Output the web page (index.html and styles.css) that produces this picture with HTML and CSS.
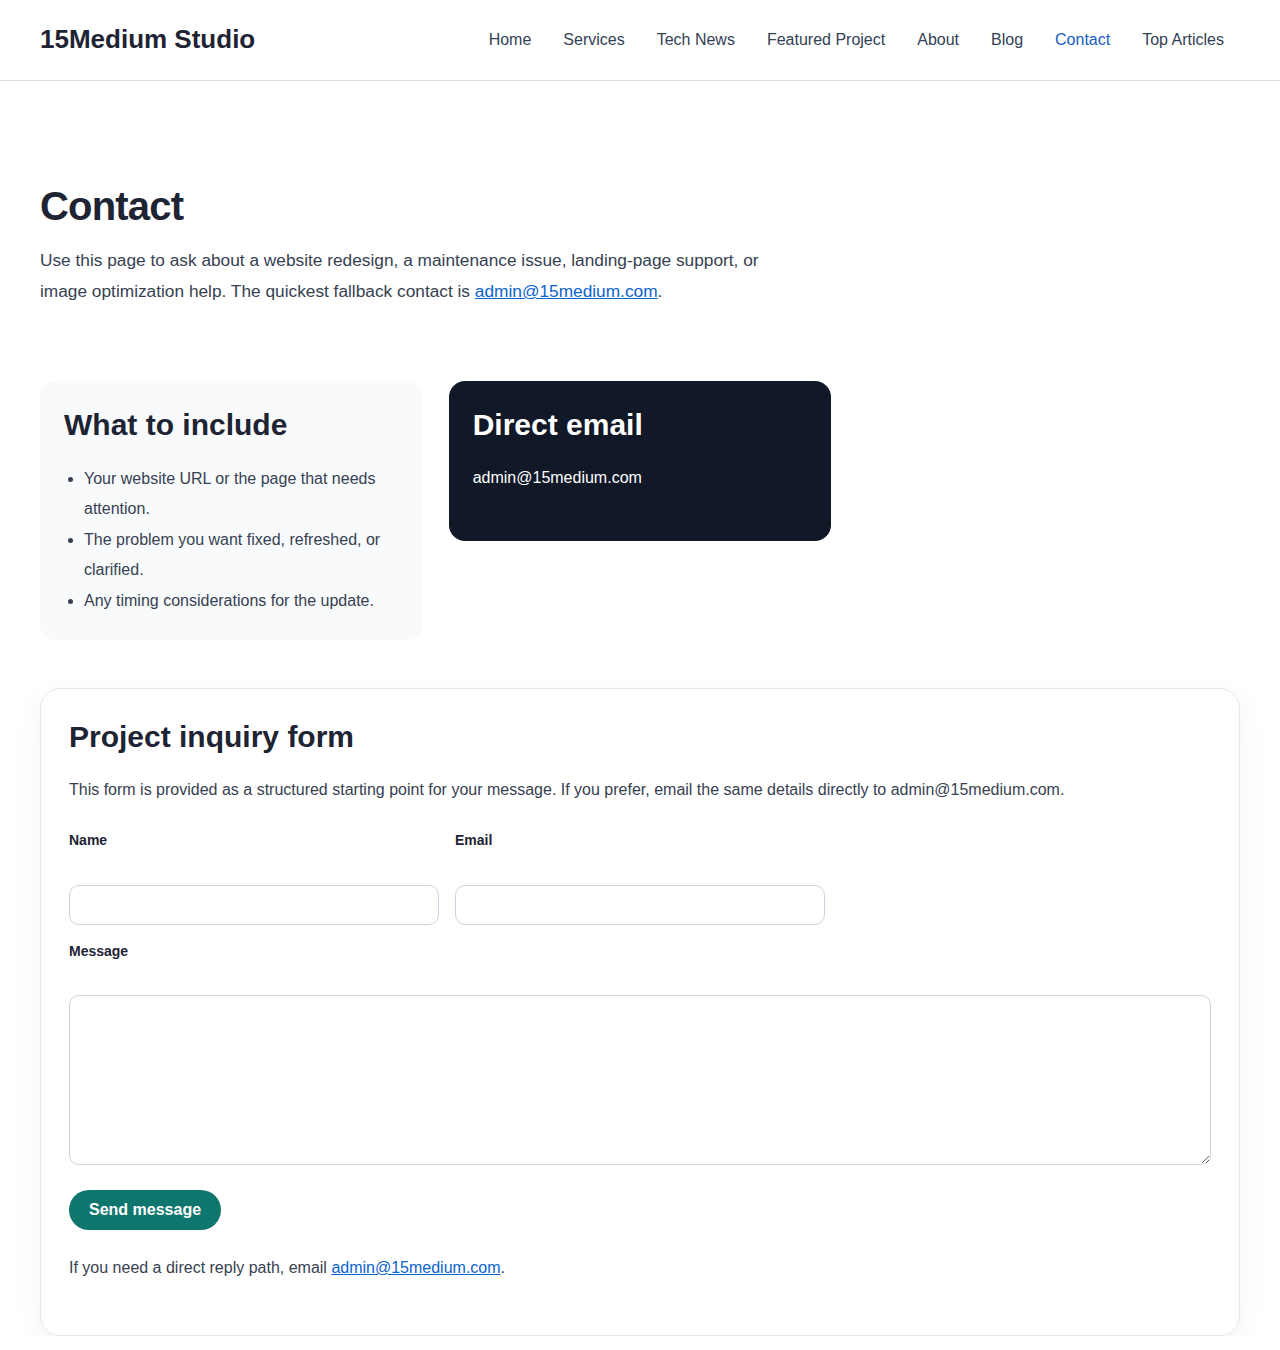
FILE: index.html
```html
<!DOCTYPE html>
<html lang="en">
<head>
<meta charset="utf-8">
<title>Contact | 15Medium Studio</title>
<link rel="stylesheet" href="styles.css">
</head>
<body>
<header class="site-header">
  <div class="container header-inner">
    <a class="logo" href="#">15Medium Studio</a>
    <nav class="nav">
      <a href="#">Home</a>
      <a href="#">Services</a>
      <a href="#">Tech News</a>
      <a href="#">Featured Project</a>
      <a href="#">About</a>
      <a href="#">Blog</a>
      <a href="#" class="active">Contact</a>
      <a href="#">Top Articles</a>
    </nav>
  </div>
</header>

<main class="container main">
  <section class="intro">
    <h1>Contact</h1>
    <p>Use this page to ask about a website redesign, a maintenance issue, landing-page support, or image optimization help. The quickest fallback contact is <a href="#">admin@15medium.com</a>.</p>
  </section>

  <section class="cards">
    <div class="card card-light">
      <h2>What to include</h2>
      <ul>
        <li>Your website URL or the page that needs attention.</li>
        <li>The problem you want fixed, refreshed, or clarified.</li>
        <li>Any timing considerations for the update.</li>
      </ul>
    </div>
    <div class="card card-dark">
      <h2>Direct email</h2>
      <p>admin@15medium.com</p>
    </div>
  </section>

  <section class="form-card">
    <h2>Project inquiry form</h2>
    <p class="form-lead">This form is provided as a structured starting point for your message. If you prefer, email the same details directly to admin@15medium.com.</p>
    <form class="form">
      <div class="row">
        <label class="field">
          <span>Name</span>
          <input type="text">
        </label>
        <label class="field">
          <span>Email</span>
          <input type="email">
        </label>
      </div>
      <label class="field field-wide">
        <span>Message</span>
        <textarea></textarea>
      </label>
      <button type="button" class="btn">Send message</button>
    </form>
    <p class="form-note">If you need a direct reply path, email <a href="#">admin@15medium.com</a>.</p>
  </section>
</main>
</body>
</html>
```

FILE: styles.css
```css
* {
  box-sizing: border-box;
}

body {
  margin: 0;
  font-family: "Liberation Sans", Arial, sans-serif;
  color: #1f2937;
  background: #ffffff;
}

.container {
  width: 1200px;
  margin: 0 auto;
}

/* Header */
.site-header {
  border-bottom: 1px solid #d8dce3;
}

.header-inner {
  height: 80px;
  display: flex;
  align-items: center;
  justify-content: space-between;
}

.logo {
  font-size: 26px;
  font-weight: 700;
  line-height: 30px;
  padding-bottom: 2px;
  color: #1e2433;
  text-decoration: none;
}

.nav {
  display: flex;
}

.nav a {
  padding: 8px 16px;
  font-size: 16px;
  color: #334155;
  text-decoration: none;
}

.nav a.active {
  color: #1a5bc4;
}

/* Intro */
.main {
  padding-top: 103px;
}

.intro h1 {
  margin: 0 0 17px;
  font-size: 40px;
  line-height: 1.1;
  letter-spacing: -0.02em;
  color: #1e2433;
}

.intro p {
  margin: 0;
  max-width: 760px;
  font-size: 17.3px;
  line-height: 31px;
  color: #374151;
}

a {
  color: #0b63ce;
}

/* Info cards */
.cards {
  margin-top: 74px;
  display: grid;
  grid-template-columns: repeat(3, 1fr);
  gap: 26px;
  align-items: start;
}

.card {
  border-radius: 16px;
  padding: 25px 24px 24px;
}

.card h2 {
  margin: 0;
  font-size: 30px;
  line-height: 37.5px;
}

.card-light {
  background: #f8fafc;
}

.card-light h2 {
  color: #1e2433;
}

.card-light ul {
  margin: 20px 0 0;
  padding-left: 20px;
  font-size: 16px;
  line-height: 30.5px;
  color: #374151;
}

.card-dark {
  background: #111827;
  color: #ffffff;
  height: 160px;
}

.card-dark p {
  margin: 22px 0 0;
  font-size: 16px;
  line-height: 24px;
}

/* Form card */
.form-card {
  margin-top: 48px;
  border: 1px solid #e2e8f0;
  border-radius: 20px;
  padding: 28px 28px 55px;
  box-shadow: 0 10px 30px rgba(15, 23, 42, 0.05);
  background: #fff;
}

.form-card h2 {
  margin: 2px 0 0;
  font-size: 30px;
  line-height: 36px;
  color: #1e2433;
}

.form-lead {
  margin: 23px 0 0;
  font-size: 16px;
  line-height: 24px;
  color: #374151;
}

.form {
  margin-top: 29px;
}

.row {
  display: grid;
  grid-template-columns: 370px 370px;
  gap: 16px;
}

.field {
  display: flex;
  flex-direction: column;
  gap: 36px;
}

.field span {
  font-size: 14px;
  font-weight: 700;
  line-height: 18px;
  color: #1e2433;
}

.field input,
.field textarea {
  display: block;
  width: 100%;
  border: 1px solid #cbd5e1;
  border-radius: 10px;
  font: inherit;
  background: #fff;
}

.field input {
  height: 40px;
}

.field-wide {
  margin-top: 17px;
  gap: 35px;
}

.field textarea {
  height: 170px;
  resize: vertical;
}

.btn {
  margin-top: 25px;
  height: 40px;
  padding: 0 20px;
  border: 0;
  border-radius: 999px;
  background: #0f766e;
  color: #fff;
  font-family: inherit;
  font-size: 16px;
  font-weight: 700;
}

.form-note {
  margin: 26px 0 0;
  font-size: 16px;
  line-height: 24px;
  color: #374151;
}
```
